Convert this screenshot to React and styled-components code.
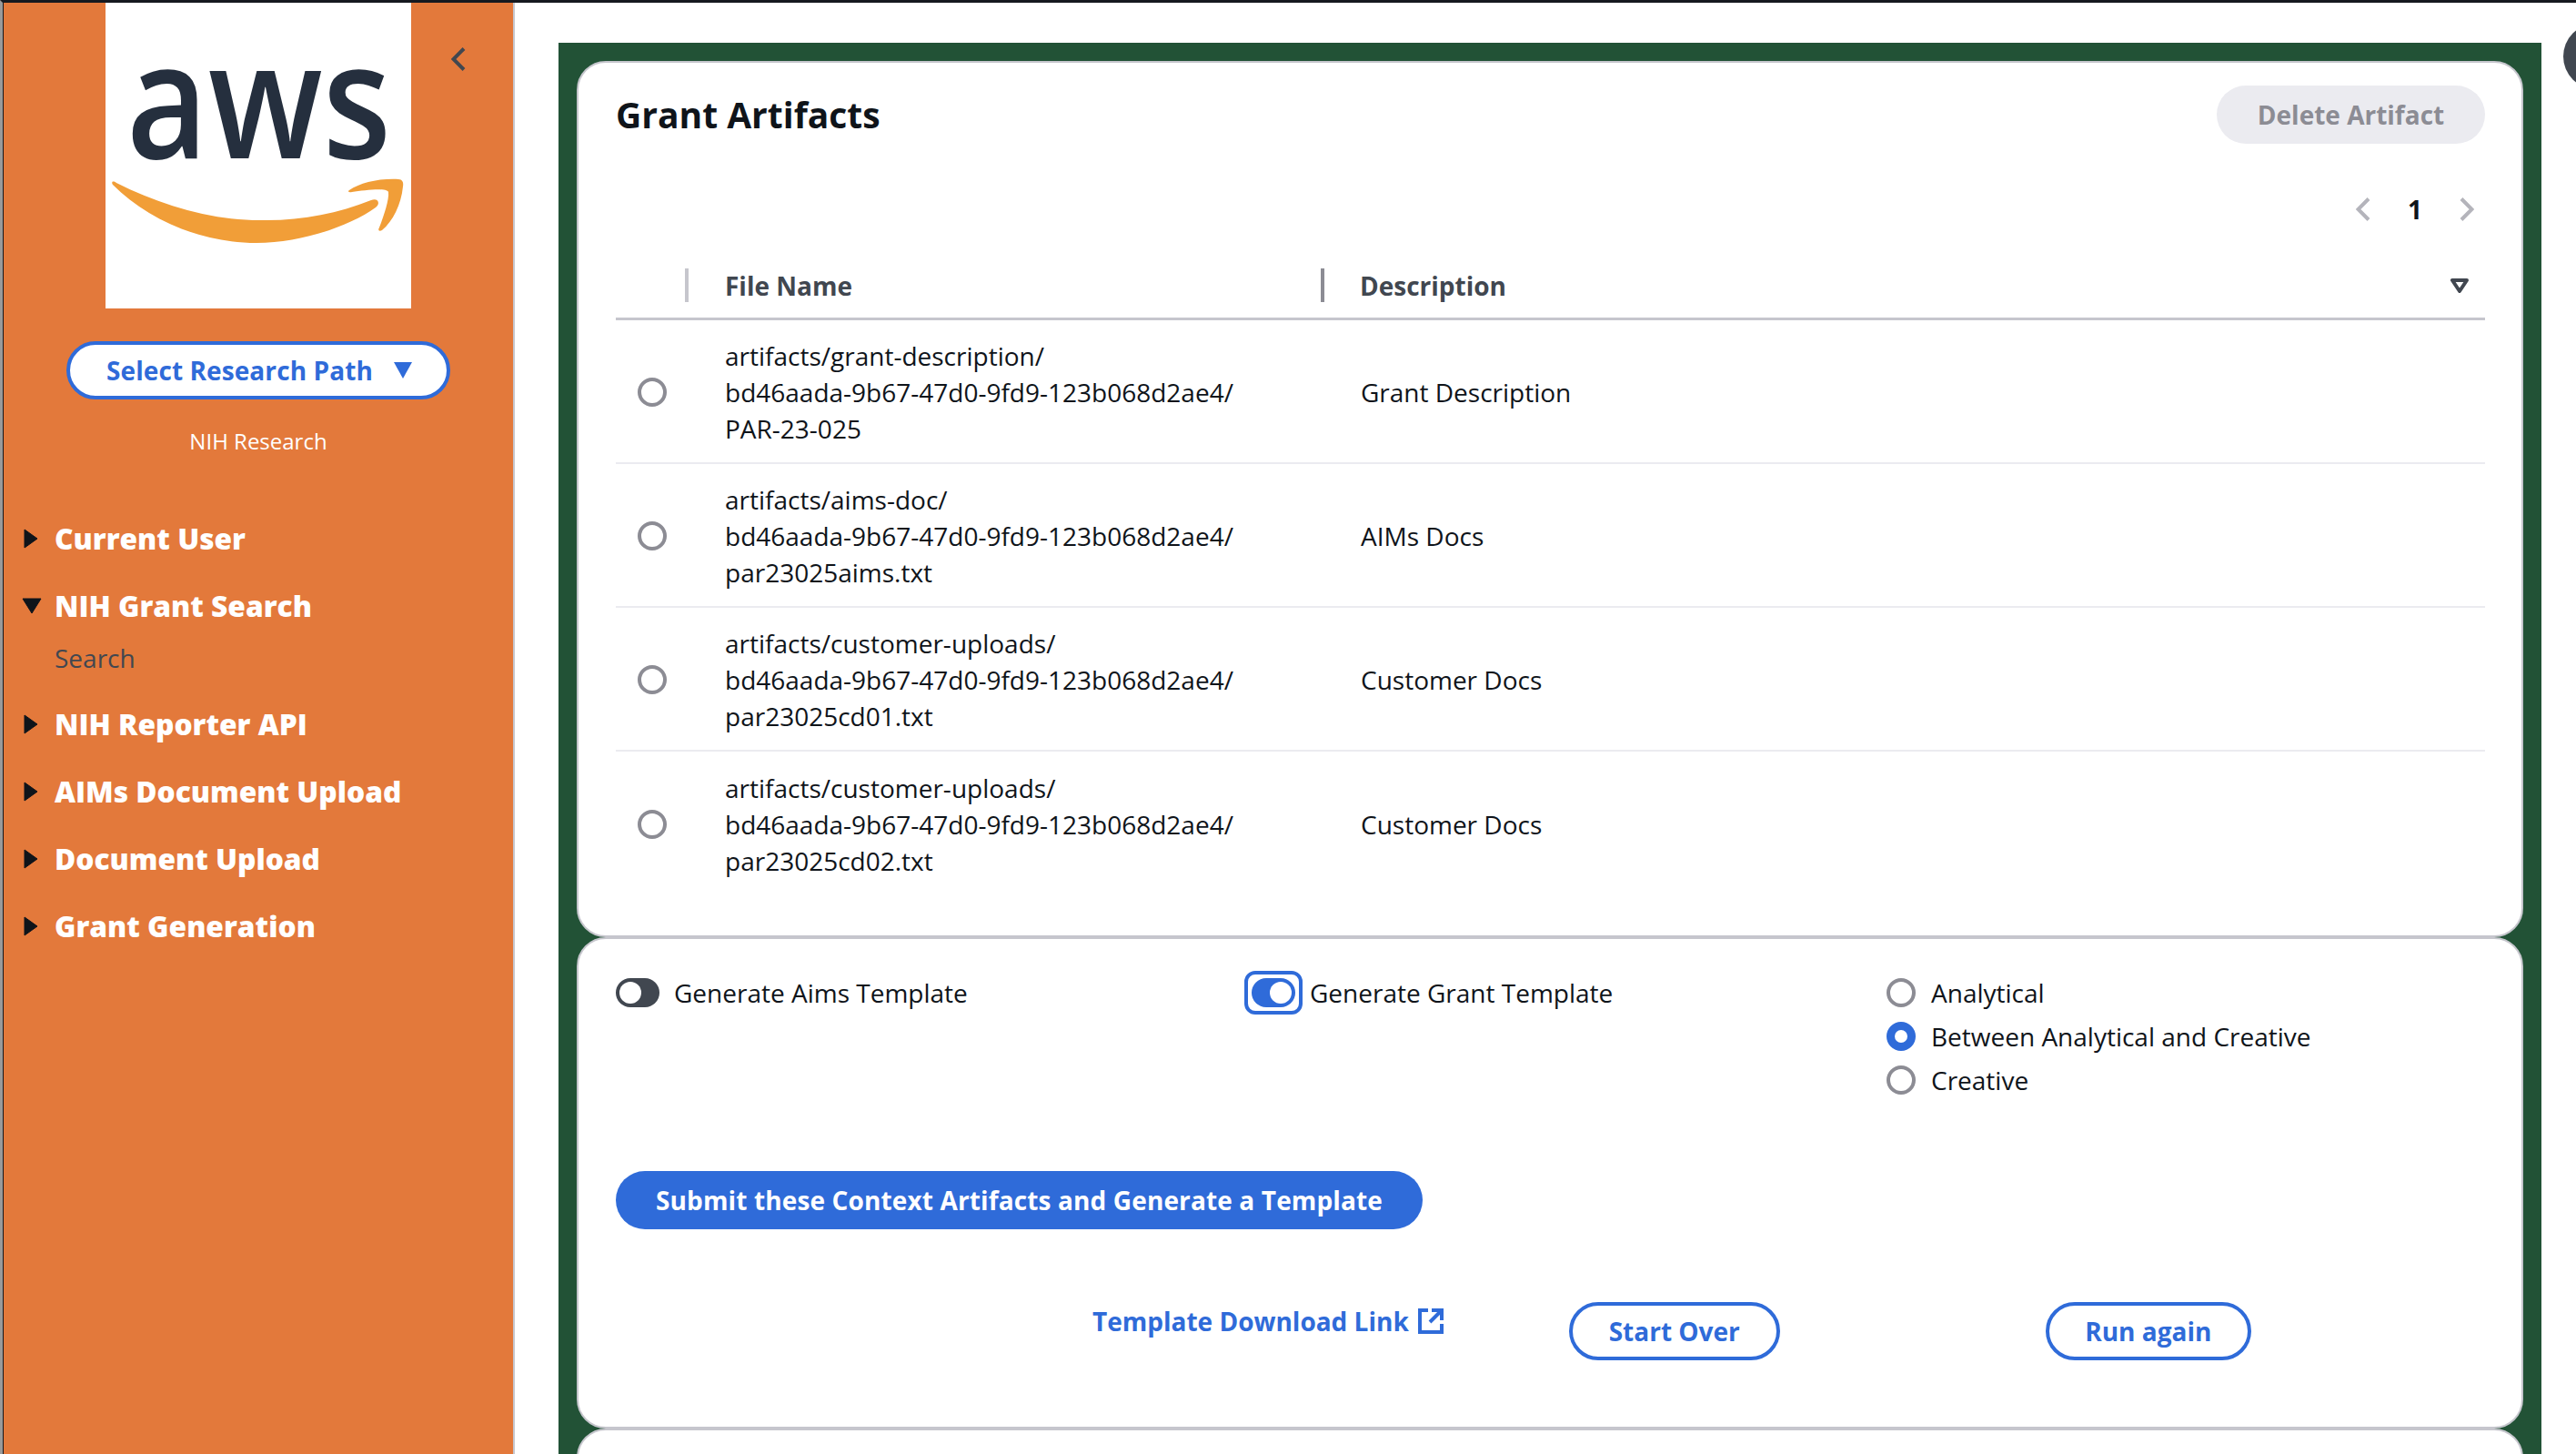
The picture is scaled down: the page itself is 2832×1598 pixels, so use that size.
import React from 'react';
import styled, { createGlobalStyle } from 'styled-components';

const BLUE = '#2f6bd9';
const GREEN = '#225236';
const ORANGE = '#e3793b';
const LINE = '#c6c6cd';

const GlobalStyle = createGlobalStyle`
  html, body { margin: 0; padding: 0; background: #fff; }
  body { font-family: "Open Sans", "Noto Sans", sans-serif; color: #0f141a; overflow: hidden; }
  * { box-sizing: border-box; }
`;

const Page = styled.div`
  position: relative;
  width: 2832px;
  height: 1598px;
  overflow: hidden;
  display: flex;
  border-top: 3px solid #16191f;
  border-left: 3px solid #9a9a9a;
`;

const EdgeDot = styled.span`
  position: absolute;
  left: -3px;
  top: ${(p) => p.$top}px;
  width: 3px;
  height: 22px;
  background: ${(p) => p.$color};
  border-radius: 0 3px 3px 0;
`;

const Sidebar = styled.aside`
  flex: 0 0 563px;
  height: 100%;
  background: ${ORANGE};
  border-left: 1px solid #16191f;
  border-right: 2px solid ${LINE};
  display: flex;
  flex-direction: column;
  align-items: flex-start;
`;

const SideTop = styled.div`
  width: 100%;
  display: flex;
  justify-content: flex-start;
  padding-left: 112px;
  gap: 44px;
`;

const LogoBox = styled.div`
  width: 336px;
  height: 336px;
  background: #fff;
`;

const CollapseBtn = styled.div`
  margin-top: 49px;
  height: 26px;
  color: #414750;
`;

const PathButton = styled.button`
  margin: 36px 0 0 69px;
  width: 422px;
  height: 64px;
  border: 4px solid ${BLUE};
  border-radius: 32px;
  background: #fff;
  color: ${BLUE};
  font: 700 28px/36px "Open Sans", sans-serif;
  letter-spacing: 0.09px;
  display: flex;
  align-items: center;
  padding: 0 0 0 40px;
  gap: 23px;
`;

const PathName = styled.div`
  width: 422px;
  margin: 28px 0 0 69px;
  text-align: center;
  color: #fff;
  font-size: 24px;
  line-height: 36px;
`;

const Nav = styled.nav`
  margin-top: 69px;
  display: flex;
  flex-direction: column;
  gap: 34px;
`;

const NavGroup = styled.div`
  display: flex;
  flex-direction: column;
`;

const NavItem = styled.div`
  display: flex;
  align-items: center;
  height: 40px;
  padding-left: 20px;
  color: #fff;
  font-size: 31.7px;
  font-weight: 800;
  line-height: 40px;
`;

const CaretSlot = styled.span`
  flex: none;
  width: 22px;
  display: flex;
  justify-content: center;
`;

const NavLabel = styled.span`
  margin-left: 14px;
`;

const NavSub = styled.div`
  margin: 17px 0 -1px 56px;
  color: #414750;
  font-size: 28px;
  line-height: 40px;
`;

const Main = styled.main`
  flex: 1;
  min-width: 0;
  padding: 44px 0 0 48px;
`;

const GreenPanel = styled.div`
  width: 2180px;
  height: 1600px;
  background: ${GREEN};
  padding: 20px 20px 0;
  display: flex;
  flex-direction: column;
`;

const Card = styled.section`
  flex: none;
  height: ${(p) => p.$height}px;
  background: #fff;
  border: 2px solid ${LINE};
  border-radius: 32px;
  padding: ${(p) => p.$padding};
  ${(p) => p.$last && 'flex: 1;'}
`;

const CardHead = styled.div`
  display: flex;
  justify-content: space-between;
  align-items: center;
  height: 64px;
`;

const CardTitle = styled.h2`
  margin: 0;
  font-size: 39px;
  line-height: 56px;
  font-weight: 700;
  color: #0f141a;
`;

const DisabledButton = styled.button`
  width: 295px;
  height: 64px;
  border: 0;
  border-radius: 32px;
  background: #ebebf0;
  color: #8c8c94;
  font: 700 28px/36px "Open Sans", sans-serif;
`;

const Pager = styled.div`
  display: flex;
  justify-content: flex-end;
  align-items: center;
  height: 26px;
  margin-top: 59px;
  padding-right: 12px;
  color: #b4b4bb;
`;

const PageNumber = styled.span`
  width: 98px;
  text-align: center;
  color: #0f141a;
  font-size: 28px;
  font-weight: 700;
  line-height: 26px;
`;

const Table = styled.div`
  margin-top: 52px;
`;

const HeadRow = styled.div`
  display: grid;
  grid-template-columns: 76px 699px 1fr 38px;
  height: 57px;
  padding-bottom: 19px;
  border-bottom: 3px solid ${LINE};
  color: #414750;
  font-size: 28px;
  font-weight: 700;
  line-height: 38px;
`;

const HeadCell = styled.div`
  height: 37px;
  padding-left: ${(p) => p.$pad || 0}px;
  border-left: ${(p) => (p.$bar ? `4px solid ${p.$bar}` : '0')};
  display: flex;
  align-items: center;
`;

const BodyRow = styled.div`
  display: grid;
  grid-template-columns: 120px 699px 1fr;
  align-items: center;
  height: 158px;
  padding-top: 1px;
  border-bottom: ${(p) => (p.$last ? '0' : '2px solid #ebebf0')};
  font-size: 28px;
  line-height: 40px;
`;

const RadioCell = styled.div`
  padding-left: 24px;
  display: flex;
`;

const Radio = styled.span`
  display: block;
  flex: none;
  width: 32px;
  height: 32px;
  border-radius: 50%;
  border: ${(p) => (p.$on ? `9px solid ${BLUE}` : '4px solid #8c8c94')};
  background: #fff;
`;

const FileCell = styled.div`
  white-space: pre-line;
`;

const DescCell = styled.div``;

const OptionRow = styled.div`
  display: grid;
  grid-template-columns: 699px 698px 1fr;
`;

const ToggleField = styled.div`
  display: flex;
  align-items: center;
  height: 32px;
  gap: 16px;
  font-size: 28px;
  line-height: 40px;
`;

const ToggleRing = styled.span`
  flex: none;
  position: relative;
  display: block;
  width: 48px;
  height: 32px;
  border-radius: 16px;
  background: ${(p) => (p.$on ? BLUE : '#414750')};
  &::after {
    content: '';
    position: absolute;
    top: 4px;
    left: ${(p) => (p.$on ? 20 : 4)}px;
    width: 24px;
    height: 24px;
    border-radius: 50%;
    background: #fff;
  }
  ${(p) =>
    p.$focus &&
    `
    &::before {
      content: '';
      position: absolute;
      inset: -8px;
      border: 4px solid ${BLUE};
      border-radius: 12px;
    }
  `}
`;

const RadioGroup = styled.div`
  display: flex;
  flex-direction: column;
  gap: 16px;
`;

const RadioOption = styled.div`
  display: flex;
  align-items: center;
  height: 32px;
  gap: 17px;
  font-size: 28px;
  line-height: 40px;
`;

const SubmitButton = styled.button`
  display: block;
  margin-top: 84px;
  width: 887px;
  height: 64px;
  border: 0;
  border-radius: 32px;
  background: ${BLUE};
  color: #fff;
  font: 700 28px/36px "Open Sans", sans-serif;
  letter-spacing: 0.13px;
`;

const ActionRow = styled.div`
  display: flex;
  align-items: flex-start;
  margin-top: 80px;
  padding-left: 524px;
`;

const DownloadLink = styled.a`
  display: flex;
  align-items: center;
  gap: 10px;
  height: 40px;
  margin: 1px 138px 0 0;
  color: ${BLUE};
  font-size: 28px;
  font-weight: 700;
  line-height: 40px;
`;

const OutlineButton = styled.button`
  width: ${(p) => p.$width}px;
  height: 64px;
  margin-right: ${(p) => p.$gap || 0}px;
  border: 4px solid ${BLUE};
  border-radius: 32px;
  background: #fff;
  color: ${BLUE};
  font: 700 28px/36px "Open Sans", sans-serif;
`;

const HelpDot = styled.div`
  position: absolute;
  top: 23px;
  left: 2815px;
  width: 72px;
  height: 72px;
  border-radius: 50%;
  background: #414750;
`;

const files = [
  { name: 'artifacts/grant-description/\nbd46aada-9b67-47d0-9fd9-123b068d2ae4/\nPAR-23-025', desc: 'Grant Description' },
  { name: 'artifacts/aims-doc/\nbd46aada-9b67-47d0-9fd9-123b068d2ae4/\npar23025aims.txt', desc: 'AIMs Docs' },
  { name: 'artifacts/customer-uploads/\nbd46aada-9b67-47d0-9fd9-123b068d2ae4/\npar23025cd01.txt', desc: 'Customer Docs' },
  { name: 'artifacts/customer-uploads/\nbd46aada-9b67-47d0-9fd9-123b068d2ae4/\npar23025cd02.txt', desc: 'Customer Docs' },
];

const AwsLogo = () => (
  <svg width="336" height="336" viewBox="0 0 336 336">
    <text x="168.5" y="171" textAnchor="middle" fontFamily="Open Sans, sans-serif" fontWeight="600" fontSize="178" fill="#252f3e" textLength="291" lengthAdjust="spacingAndGlyphs">aws</text>
    <path d="M8 200C46 238 104 264 166 264C214 264 268 246 297 225C303 220 299 214 292 217C254 232 214 240 170 239C114 239 60 222 12 198C8 195 6 197 8 200z" fill="#f19e38" />
    <path d="M268 206C280 198 300 193 322 194C326 194 328 197 327 202C325 222 316 240 304 250C301 252 299 250 301 247C306 234 312 216 311 208C309 203 285 206 271 208C267 209 266 207 268 206z" fill="#f19e38" />
  </svg>
);

const Chevron = ({ dir }) => (
  <svg width="16" height="26" viewBox="0 0 16 26" fill="none" stroke="currentColor" strokeWidth="4">
    <path d={dir === 'left' ? 'M14 1.5 2.5 13 14 24.5' : 'M2 1.5 13.5 13 2 24.5'} />
  </svg>
);

const Caret = ({ open }) => (
  <CaretSlot>
    {open ? (
      <svg width="22" height="18" viewBox="0 0 22 18"><path d="M1 1h20L11 17z" fill="#0f141a" stroke="#0f141a" strokeWidth="1" strokeLinejoin="round" /></svg>
    ) : (
      <svg width="18" height="22" viewBox="0 0 18 22"><path d="M1 1v20l14-10z" fill="#0f141a" stroke="#0f141a" strokeWidth="1" strokeLinejoin="round" /></svg>
    )}
  </CaretSlot>
);

const navItems = ['NIH Reporter API', 'AIMs Document Upload', 'Document Upload', 'Grant Generation'];

export default function App() {
  return (
    <>
      <GlobalStyle />
      <Page>
        <EdgeDot $top={112} $color="#2f5fb5" />
        <EdgeDot $top={207} $color="#b5352c" />
        <Sidebar>
          <SideTop>
            <LogoBox><AwsLogo /></LogoBox>
            <CollapseBtn><Chevron dir="left" /></CollapseBtn>
          </SideTop>
          <PathButton>
            Select Research Path
            <svg width="20" height="18" viewBox="0 0 20 18"><path d="M0 0h20L10 18z" fill={BLUE} /></svg>
          </PathButton>
          <PathName>NIH Research</PathName>
          <Nav>
            <NavItem><Caret /><NavLabel>Current User</NavLabel></NavItem>
            <NavGroup>
              <NavItem><Caret open /><NavLabel>NIH Grant Search</NavLabel></NavItem>
              <NavSub>Search</NavSub>
            </NavGroup>
            {navItems.map((n) => (
              <NavItem key={n}><Caret /><NavLabel>{n}</NavLabel></NavItem>
            ))}
          </Nav>
        </Sidebar>
        <Main>
          <GreenPanel>
            <Card $height={963} $padding="25px 40px 0 41px">
              <CardHead>
                <CardTitle>Grant Artifacts</CardTitle>
                <DisabledButton>Delete Artifact</DisabledButton>
              </CardHead>
              <Pager>
                <Chevron dir="left" />
                <PageNumber>1</PageNumber>
                <Chevron dir="right" />
              </Pager>
              <Table>
                <HeadRow>
                  <HeadCell />
                  <HeadCell $bar={LINE} $pad={40}>File Name</HeadCell>
                  <HeadCell $bar="#8c8c94" $pad={39}>Description</HeadCell>
                  <HeadCell>
                    <svg width="20" height="16" viewBox="0 0 20 16" fill="none" stroke="#414750" strokeWidth="4" strokeLinejoin="round"><path d="M2 2h16l-8 12z" /></svg>
                  </HeadCell>
                </HeadRow>
                {files.map((f, i) => (
                  <BodyRow key={i} $last={i === files.length - 1}>
                    <RadioCell><Radio /></RadioCell>
                    <FileCell>{f.name}</FileCell>
                    <DescCell>{f.desc}</DescCell>
                  </BodyRow>
                ))}
              </Table>
            </Card>
            <Card $height={540} $padding="43px 40px 0 41px">
              <OptionRow>
                <ToggleField><ToggleRing /><span>Generate Aims Template</span></ToggleField>
                <ToggleField><ToggleRing $on $focus /><span>Generate Grant Template</span></ToggleField>
                <RadioGroup>
                  <RadioOption><Radio /><span>Analytical</span></RadioOption>
                  <RadioOption><Radio $on /><span>Between Analytical and Creative</span></RadioOption>
                  <RadioOption><Radio /><span>Creative</span></RadioOption>
                </RadioGroup>
              </OptionRow>
              <SubmitButton>Submit these Context Artifacts and Generate a Template</SubmitButton>
              <ActionRow>
                <DownloadLink>
                  Template Download Link
                  <svg width="28" height="28" viewBox="0 0 28 28" fill="none" stroke={BLUE} strokeWidth="4"><path d="M11 2H2v24h24v-9M15 2h11v11M26 2 13 15" /></svg>
                </DownloadLink>
                <OutlineButton $width={232} $gap={292}>Start Over</OutlineButton>
                <OutlineButton $width={226}>Run again</OutlineButton>
              </ActionRow>
            </Card>
            <Card $last $padding="0" />
          </GreenPanel>
        </Main>
        <HelpDot />
      </Page>
    </>
  );
}
